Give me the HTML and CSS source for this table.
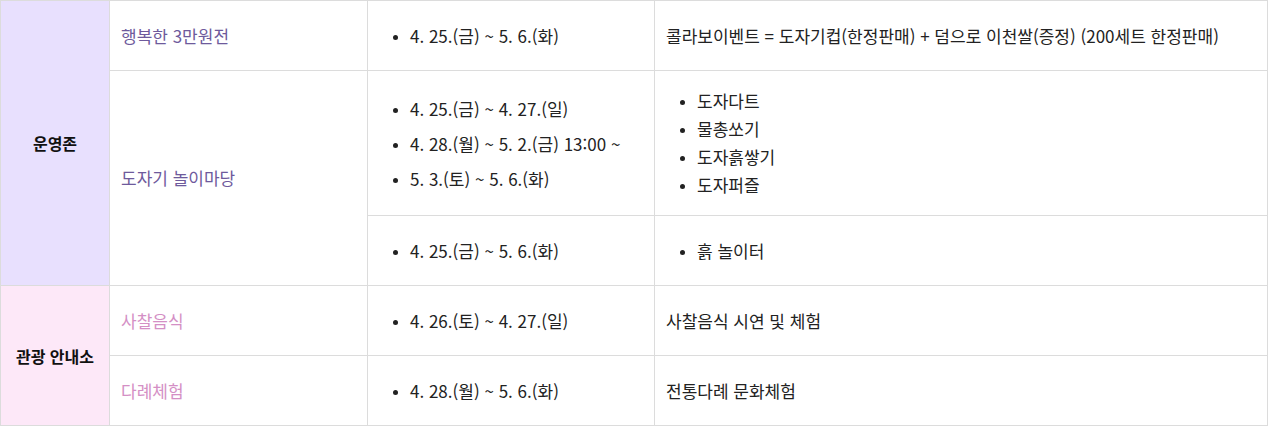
FILE: index.html
```html
<!DOCTYPE html>
<html lang="ko">
<head>
<meta charset="utf-8">
<link rel="stylesheet" href="styles.css">
</head>
<body>
<table class="sched">
  <colgroup>
    <col class="c1"><col class="c2"><col class="c3"><col class="c4">
  </colgroup>
  <tbody>
    <tr class="r70">
      <th rowspan="3" class="zone zone-op">운영존</th>
      <td class="name name-op">행복한 3만원전</td>
      <td><ul class="dates"><li>4. 25.(금) ~ 5. 6.(화)</li></ul></td>
      <td>콜라보이벤트 = 도자기컵(한정판매) + 덤으로 이천쌀(증정) (200세트 한정판매)</td>
    </tr>
    <tr class="r145">
      <td rowspan="2" class="name name-op">도자기 놀이마당</td>
      <td><ul class="dates"><li>4. 25.(금) ~ 4. 27.(일)</li><li>4. 28.(월) ~ 5. 2.(금) 13:00 ~</li><li>5. 3.(토) ~ 5. 6.(화)</li></ul></td>
      <td><ul class="items"><li>도자다트</li><li>물총쏘기</li><li>도자흙쌓기</li><li>도자퍼즐</li></ul></td>
    </tr>
    <tr class="r70">
      <td><ul class="dates"><li>4. 25.(금) ~ 5. 6.(화)</li></ul></td>
      <td><ul class="items"><li>흙 놀이터</li></ul></td>
    </tr>
    <tr class="r70">
      <th rowspan="2" class="zone zone-info">관광 안내소</th>
      <td class="name name-info">사찰음식</td>
      <td><ul class="dates"><li>4. 26.(토) ~ 4. 27.(일)</li></ul></td>
      <td>사찰음식 시연 및 체험</td>
    </tr>
    <tr class="r70">
      <td class="name name-info">다례체험</td>
      <td><ul class="dates"><li>4. 28.(월) ~ 5. 6.(화)</li></ul></td>
      <td>전통다례 문화체험</td>
    </tr>
  </tbody>
</table>
</body>
</html>
```

FILE: styles.css
```css
html, body {
  margin: 0;
  padding: 0;
  background: #fff;
}
body {
  font-family: "Noto Sans CJK KR", "Noto Sans", sans-serif;
  font-size: 17px;
  color: #222;
}
.sched {
  border-collapse: collapse;
  width: 1267px;
  table-layout: fixed;
}
.c1 { width: 109px; }
.c2 { width: 258px; }
.c3 { width: 287px; }
.c4 { width: 613px; }
.sched th, .sched td {
  border: 1px solid #dcdcdc;
  padding: 0 11px;
  vertical-align: middle;
  text-align: left;
  font-weight: normal;
  line-height: 28px;
}
.r70 { height: 70px; }
.r145 { height: 145px; }
.sched th.zone {
  text-align: center;
  font-weight: bold;
  font-size: 16px;
  color: #111;
  padding: 0 4px;
}
.zone-op { background: #e8e0fe; }
.zone-info { background: #fde8f8; }
.name-op { color: #6e5a9c; }
.name-info { color: #d48fc5; }
.dates, .items {
  margin: 0;
  padding-left: 31px;
}
.dates li { line-height: 35px; }
.items li { line-height: 28px; }
.dates li::marker, .items li::marker {
  font-size: 13px;
}
```
